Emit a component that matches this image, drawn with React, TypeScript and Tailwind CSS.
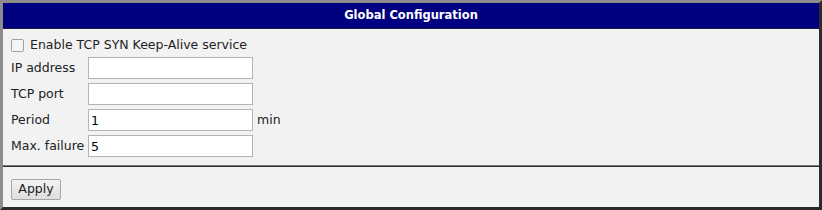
import React from 'react';

const rows = [
  { label: 'IP address', value: '', unit: '' },
  { label: 'TCP port', value: '', unit: '' },
  { label: 'Period', value: '1', unit: 'min' },
  { label: 'Max. failure', value: '5', unit: '' },
];

const font = { fontFamily: '"DejaVu Sans", Verdana, sans-serif' };

export default function App() {
  return (
    <div className="w-[822px] h-[210px] bg-white" style={font}>
      <div className="h-full flex flex-col border-[3px] border-t-[#8c8c8c] border-l-[#8c8c8c] border-r-[#2b2b2b] border-b-[#2b2b2b] bg-[#f2f2f2]">
        <div className="h-[26px] bg-[#000080] flex items-center justify-center text-white text-[11.5px] font-bold border-b border-[#1a1a40]">
          Global Configuration
        </div>
        <div className="flex-1 pt-[6px] pl-[8px] text-[12.5px] text-[#222]">
          <div className="h-[20px] flex items-center">
            <span className="w-[13px] h-[13px] rounded-[2px] border border-[#a0a0a0] bg-[#f4f4f4]" />
            <span className="ml-[6px]">Enable TCP SYN Keep-Alive service</span>
          </div>
          <div className="mt-[2px] flex flex-col gap-[4px]">
            {rows.map(r => (
              <div key={r.label} className="flex items-center h-[22px]">
                <span className="w-[77px] whitespace-nowrap pt-[1px]">{r.label}</span>
                <input
                  readOnly
                  value={r.value}
                  className="w-[165px] h-[22px] bg-white border border-[#b4b4b4] px-[2px] text-[12.5px] text-black outline-none"
                  style={font}
                />
                {r.unit && <span className="ml-[4px] pt-[1px]">{r.unit}</span>}
              </div>
            ))}
          </div>
        </div>
        <div className="h-px bg-[#7a7a7a]" />
        <div className="h-px bg-[#2b2b2b]" />
        <div className="h-[40px] pl-[8px] pt-[9px]">
          <button
            className="w-[50px] h-[21px] border border-[#a6a6a6] rounded-[2px] bg-gradient-to-b from-[#f3f3f3] to-[#dedede] text-[12.5px] text-[#222]"
            style={font}
          >
            Apply
          </button>
        </div>
      </div>
    </div>
  );
}
